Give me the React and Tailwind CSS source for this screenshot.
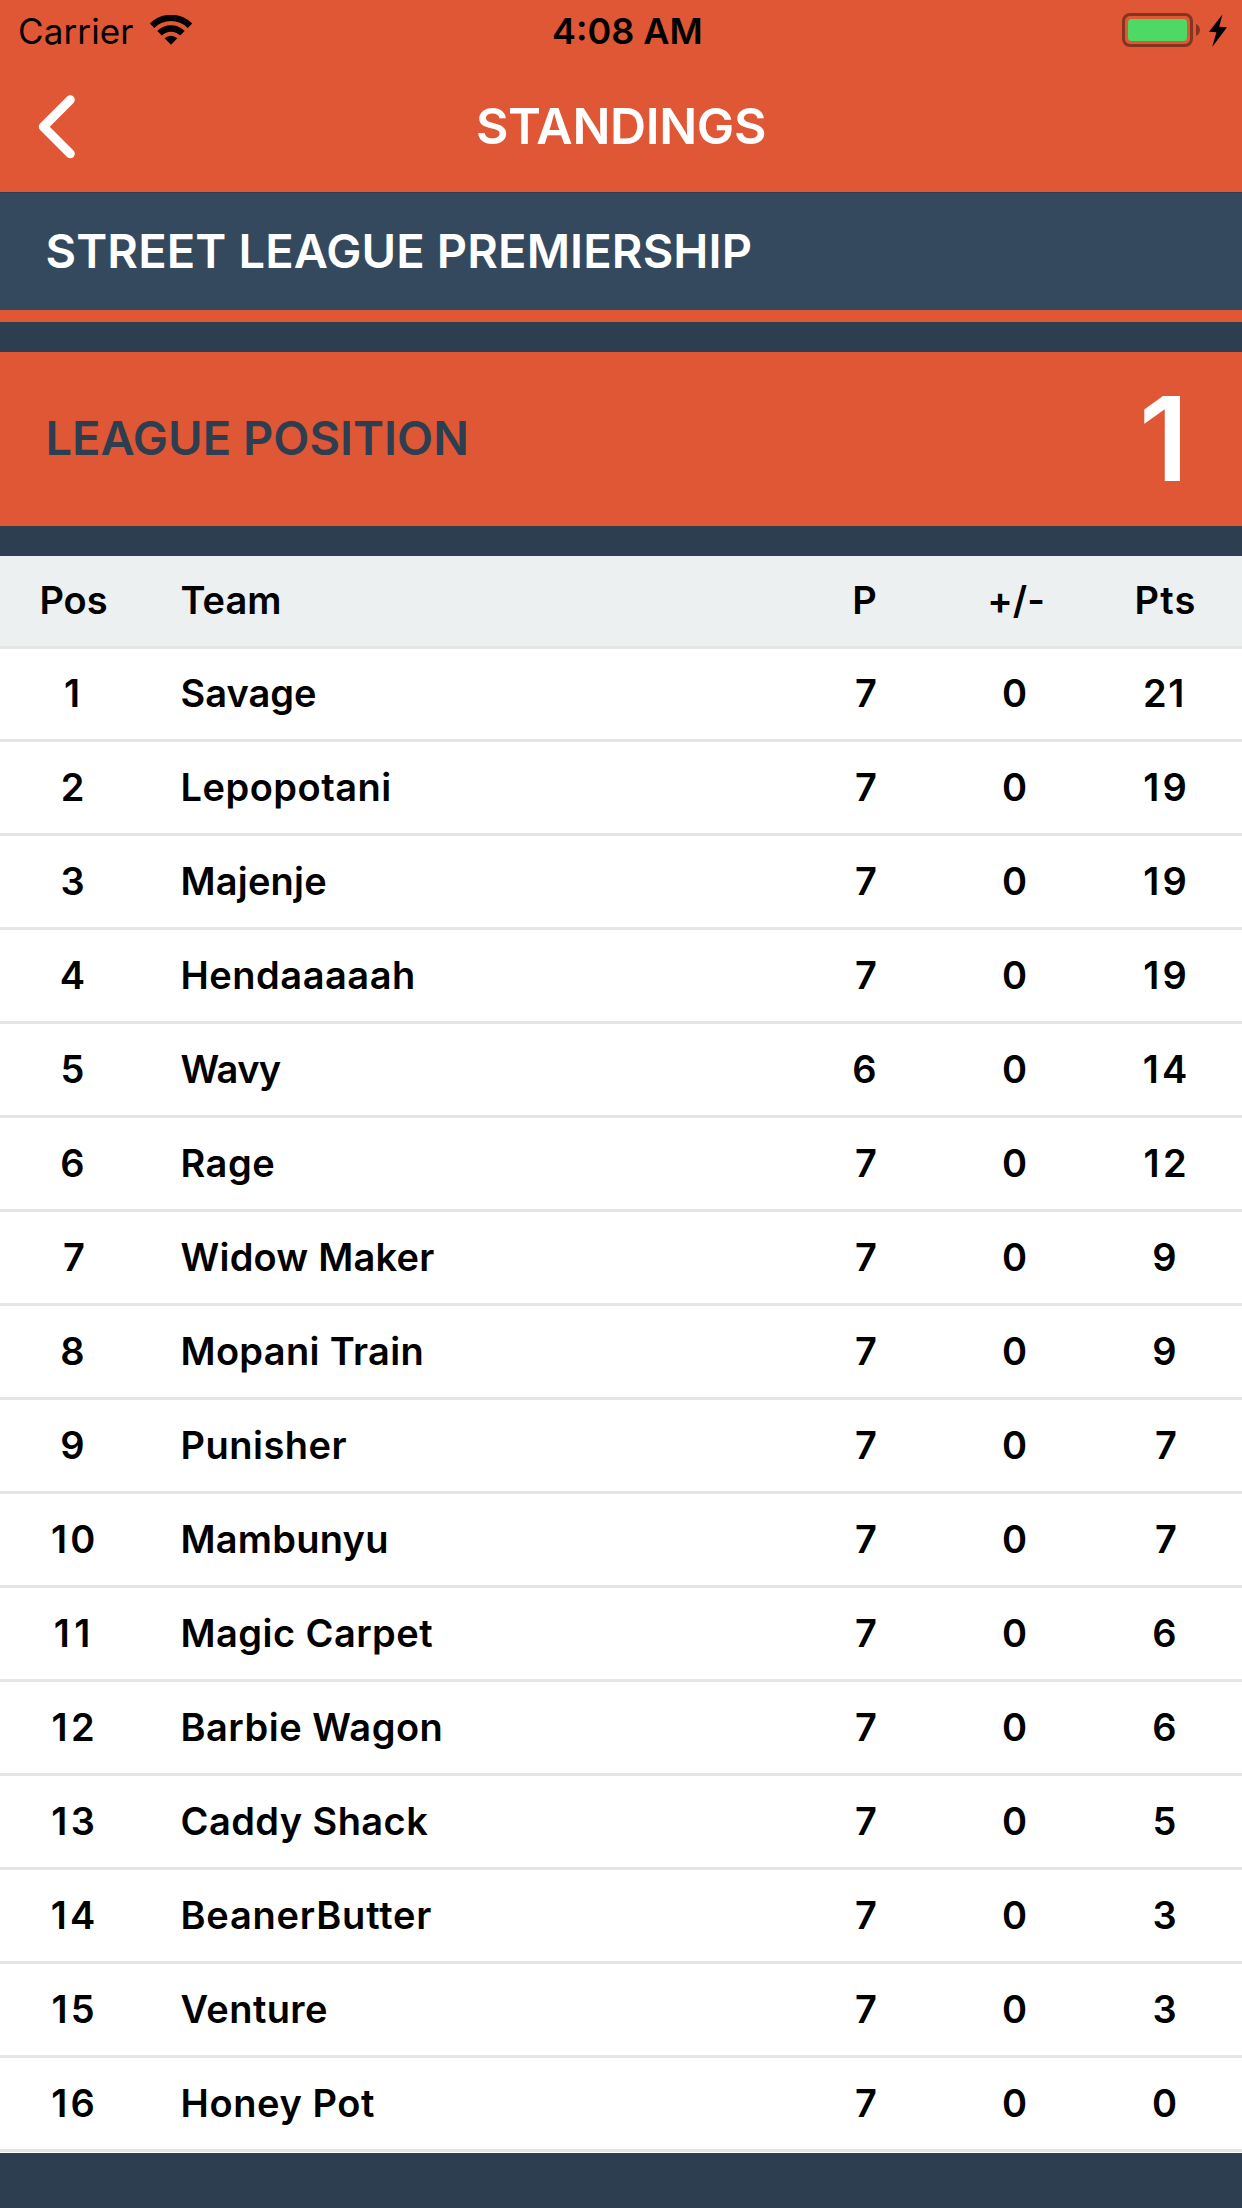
import React from 'react';

const teams = [
  { name: 'Savage', p: 7, pts: 21, track: 'tracking-normal' },
  { name: 'Lepopotani', p: 7, pts: 19, track: 'tracking-[0.5px]' },
  { name: 'Majenje', p: 7, pts: 19, track: 'tracking-[0.2px]' },
  { name: 'Hendaaaaah', p: 7, pts: 19, track: 'tracking-[0.52px]' },
  { name: 'Wavy', p: 6, pts: 14, track: 'tracking-[-0.6px]' },
  { name: 'Rage', p: 7, pts: 12, track: 'tracking-[0.5px]' },
  { name: 'Widow Maker', p: 7, pts: 9, track: 'tracking-[0.22px]' },
  { name: 'Mopani Train', p: 7, pts: 9, track: 'tracking-[0.34px]' },
  { name: 'Punisher', p: 7, pts: 7, track: 'tracking-[0.48px]' },
  { name: 'Mambunyu', p: 7, pts: 7, track: 'tracking-[0.24px]' },
  { name: 'Magic Carpet', p: 7, pts: 6, track: 'tracking-[0.45px]' },
  { name: 'Barbie Wagon', p: 7, pts: 6, track: 'tracking-[0.49px]' },
  { name: 'Caddy Shack', p: 7, pts: 5, track: 'tracking-[0.42px]' },
  { name: 'BeanerButter', p: 7, pts: 3, track: 'tracking-[0.78px]' },
  { name: 'Venture', p: 7, pts: 3, track: 'tracking-[0.4px]' },
  { name: 'Honey Pot', p: 7, pts: 0, track: 'tracking-[0.6px]' },
];

const COLUMNS =
  'grid grid-cols-[145px_1fr_150px_150px_150px] pr-[2.5px] text-[38px] font-semibold text-black text-center';

// Two-digit values are set slightly wider than single digits.
function Num({ value }) {
  let fit = 'tracking-normal';
  if (value === 21) fit = 'tracking-[1.6px]';
  else if (value === 11) fit = 'tracking-[4.4px] pl-[3.4px]';
  else if (value > 9) fit = 'tracking-[3.2px] pl-[4.4px]';
  else if (value === 7) fit = 'pl-[3px]';
  else if (value === 1) fit = 'pr-[1px]';
  return <span className={fit}>{value}</span>;
}

function WifiIcon() {
  return (
    <svg className="h-[30px] w-[42px]" viewBox="0 0 42 30" fill="none" stroke="#000" strokeWidth="6.4">
      <path d="M2.05 10.75A26.8 26.8 0 0 1 39.95 10.75" />
      <path d="M9.54 18.24A16.2 16.2 0 0 1 32.46 18.24" />
      <path d="M21 29.7L14.64 23.34A9 9 0 0 1 27.36 23.34Z" fill="#000" stroke="none" />
    </svg>
  );
}

function BatteryIcon() {
  return (
    <svg className="h-[34px] w-[106px]" viewBox="0 0 106 34" fill="none">
      <rect x="1.5" y="1.5" width="68" height="31" rx="6.5" stroke="#000" strokeOpacity="0.4" strokeWidth="3" />
      <rect x="6" y="6" width="59" height="22" rx="3.5" fill="#4cd964" />
      <path d="M74 11C79.3 13 79.3 21 74 23Z" fill="#000" fillOpacity="0.4" />
      <path d="M100.4 1.5L87 18.7L94.4 19.2L90.2 34L105 14.2L97.2 13.8Z" fill="#000" />
    </svg>
  );
}

export default function App() {
  return (
    <div className="flex h-[2208px] w-[1242px] flex-col overflow-hidden bg-[#2c3e50] font-['Inter',sans-serif] whitespace-nowrap">
      <header className="h-[192px] bg-[#e05735]">
        <div className="flex h-[62px] items-start text-black">
          <div className="flex w-[552px] pl-[18px]">
            <span className="w-[132px] text-[35px] leading-[62px] tracking-[0.13px]">Carrier</span>
            <div className="pt-[15px]">
              <WifiIcon />
            </div>
          </div>
          <span className="w-[570px] text-[36px] leading-[62px] font-semibold">4:08 AM</span>
          <div className="pt-[13px]">
            <BatteryIcon />
          </div>
        </div>
        <div className="grid h-[130px] grid-cols-[110px_1fr_110px]">
          <button className="flex items-start pt-[32px] pl-[36px]" aria-label="Back">
            <svg className="h-[66px] w-[42px]" viewBox="36 94 42 66" fill="none" stroke="#fff" strokeWidth="9" strokeLinecap="round" strokeLinejoin="round">
              <path d="M70.3 99.7L43.3 126.7L70.3 153.7" />
            </svg>
          </button>
          <h1 className="text-center text-[50px] leading-[128px] font-semibold tracking-[-0.36px] text-white">STANDINGS</h1>
        </div>
      </header>

      <section className="mt-px h-[129px] border-b-[12px] border-[#e05735] bg-[#34495e] pl-[45.5px]">
        <h2 className="text-[47px] leading-[115px] font-semibold tracking-[0.13px] text-white">STREET LEAGUE PREMIERSHIP</h2>
      </section>

      <section className="mt-[30px] flex h-[174px] items-start justify-between bg-[#e05735] pr-[53.5px] pl-[45.5px]">
        <span className="text-[47px] leading-[171px] font-semibold text-[#2c3e50]">LEAGUE POSITION</span>
        <span className="text-[117px] leading-[173px] font-semibold text-white">1</span>
      </section>

      <main className="mt-[30px] bg-white pb-px">
        <div className={`${COLUMNS} h-[93px] border-b-[3px] border-[#e5e5e5] bg-[#ecf0f1] leading-[88px]`}>
          <span className="pl-[2px]">Pos</span>
          <span className="pl-[35.5px] text-left">Team</span>
          <span>P</span>
          <span className="pl-[3px]">+/-</span>
          <span className="pl-[2px] tracking-[1.2px]">Pts</span>
        </div>
        {teams.map((team, i) => (
          <div
            key={team.name}
            className={`${COLUMNS} border-b-[3px] border-[#e5e5e5] ${i === 0 ? 'h-[93px] leading-[88px]' : 'h-[94px] leading-[90px]'}`}
          >
            <div><Num value={i + 1} /></div>
            <div className={`pl-[35.5px] text-left ${team.track}`}>{team.name}</div>
            <div><Num value={team.p} /></div>
            <div><Num value={0} /></div>
            <div><Num value={team.pts} /></div>
          </div>
        ))}
      </main>
    </div>
  );
}
